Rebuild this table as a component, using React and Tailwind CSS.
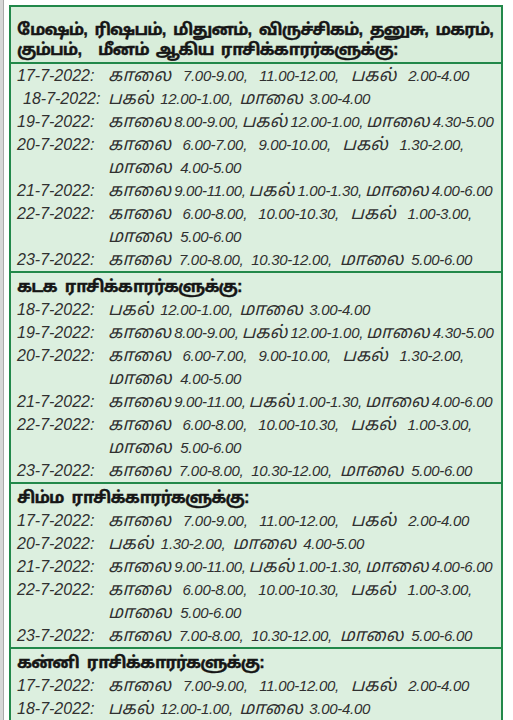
import React from 'react';

const font = '"Liberation Sans", "Noto Sans Tamil", "Lohit Tamil", "Noto Sans", sans-serif';

// each line: [text, width class] – words are spread over the width, like the printed table
const d = {
  d17: ['17-7-2022:', ['காலை 7.00-9.00, 11.00-12.00, பகல் 2.00-4.00', 'w-[361px]']],
  d18: ['18-7-2022:', ['பகல் 12.00-1.00, மாலை 3.00-4.00', 'w-[262px]']],
  d19: ['19-7-2022:', ['காலை 8.00-9.00, பகல் 12.00-1.00, மாலை 4.30-5.00', 'w-[378px]']],
  d20: [
    '20-7-2022:',
    ['காலை 6.00-7.00, 9.00-10.00, பகல் 1.30-2.00,', 'w-[356px]'],
    ['மாலை 4.00-5.00', 'w-[133px]'],
  ],
  d21: ['21-7-2022:', ['காலை 9.00-11.00, பகல் 1.00-1.30, மாலை 4.00-6.00', 'w-[378px]']],
  d22: [
    '22-7-2022:',
    ['காலை 6.00-8.00, 10.00-10.30, பகல் 1.00-3.00,', 'w-[364px]'],
    ['மாலை 5.00-6.00', 'w-[133px]'],
  ],
  d23: ['23-7-2022:', ['காலை 7.00-8.00, 10.30-12.00, மாலை 5.00-6.00', 'w-[364px]']],
};

const sections = [
  {
    title: 'கடக ராசிக்காரர்களுக்கு:',
    rows: [d.d18, d.d19, d.d20, d.d21, d.d22, d.d23],
  },
  {
    title: 'சிம்ம ராசிக்காரர்களுக்கு:',
    rows: [
      d.d17,
      ['20-7-2022:', ['பகல் 1.30-2.00, மாலை 4.00-5.00', 'w-[256px]']],
      d.d21,
      d.d22,
      d.d23,
    ],
  },
  {
    title: 'கன்னி ராசிக்காரர்களுக்கு:',
    rows: [d.d17, d.d18, d.d19, d.d20],
  },
];

const isTamil = (w) => /[\u0B80-\u0BFF]/.test(w);

const Line = ({ text, width }) => (
  <div className={`flex justify-between gap-[3px] ${width}`}>
    {text.split(' ').map((w, i) => (
      <span
        key={i}
        className={`whitespace-nowrap ${
          isTamil(w) ? 'text-[17.5px]' : 'text-[15px] tracking-[-0.3px]'
        }`}
      >
        {w}
      </span>
    ))}
  </div>
);

const Row = ({ row, indent }) => {
  const [date, ...lines] = row;
  return (
    <div className="flex italic leading-[23px] text-[#303030]">
      <span className={`w-[91px] shrink-0 text-[16px] ${indent ? 'pl-[6px]' : ''}`}>{date}</span>
      <div className="flex flex-col">
        {lines.map(([t, w], i) => (
          <Line key={i} text={t} width={w} />
        ))}
      </div>
    </div>
  );
};

export default function App() {
  return (
    <div className="flex min-h-screen bg-white" style={{ fontFamily: font }}>
      {/* page edge */}
      <div className="w-[4px] shrink-0 bg-[#d6d6d6] border-r border-[#a9a9a9]" />

      <div className="flex-1 pl-[5px] pr-[10px] pt-[5px]">
        <div className="border-2 border-[#22884a] bg-[#dcefdf]">
          {/* first header */}
          <div className="px-[6px] pt-[12px] pb-[3px] font-bold text-[16.5px] tracking-[-0.9px] leading-[20px] text-[#161616] [-webkit-text-stroke:0.35px_#161616] bg-[#d8edda]">
            <div className="flex justify-between pr-[2px]">
              <span>மேஷம்,</span>
              <span>ரிஷபம்,</span>
              <span>மிதுனம்,</span>
              <span>விருச்சிகம்,</span>
              <span>தனுசு,</span>
              <span>மகரம்,</span>
            </div>
            <div className="flex gap-[7px]">
              <span className="mr-[10px]">கும்பம்,</span>
              <span>மீனம்</span>
              <span>ஆகிய</span>
              <span>ராசிக்காரர்களுக்கு:</span>
            </div>
          </div>

          <div className="border-t-2 border-[#22884a] px-[6px]">
            <Row row={d.d17} />
            <Row row={d.d18} indent />
            <Row row={d.d19} />
            <Row row={d.d20} />
            <Row row={d.d21} />
            <Row row={d.d22} />
            <Row row={d.d23} />
          </div>

          {sections.map((s) => (
            <div key={s.title} className="border-t-2 border-[#22884a] px-[6px] pt-[2px]">
              <div className="font-bold text-[16.5px] tracking-[-0.9px] leading-[23px] text-[#161616] [-webkit-text-stroke:0.35px_#161616] flex gap-[8px]">
                {s.title.split(' ').map((w) => (
                  <span key={w}>{w}</span>
                ))}
              </div>
              {s.rows.map((r, i) => (
                <Row key={i} row={r} />
              ))}
            </div>
          ))}
        </div>
      </div>
    </div>
  );
}
